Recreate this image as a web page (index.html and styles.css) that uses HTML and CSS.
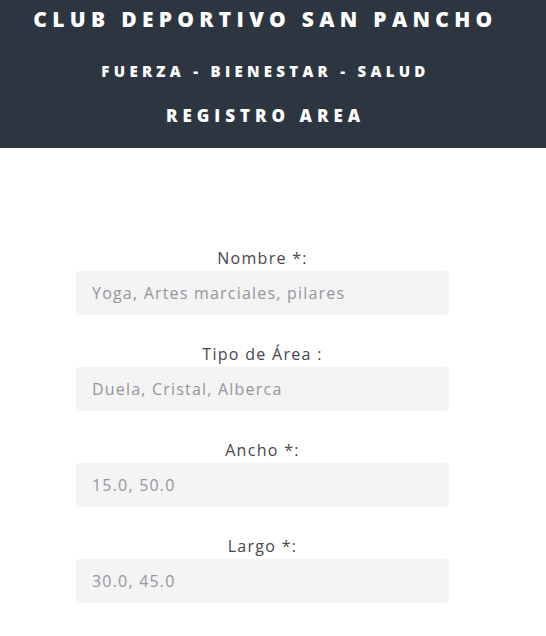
FILE: index.html
```html
<!DOCTYPE html>
<html lang="es">
<head>
<meta charset="utf-8">
<title>Registro Area</title>
<link rel="stylesheet" href="styles.css">
</head>
<body>
<header class="site-header">
  <h1 class="club-title">CLUB DEPORTIVO SAN PANCHO</h1>
  <p class="club-motto">FUERZA - BIENESTAR - SALUD</p>
  <h2 class="page-title">REGISTRO AREA</h2>
</header>
<main class="content">
  <form class="area-form">
    <div class="field">
      <label class="field-label" for="nombre">Nombre *:</label>
      <input class="field-input" id="nombre" type="text" placeholder="Yoga, Artes marciales, pilares">
    </div>
    <div class="field">
      <label class="field-label" for="tipo">Tipo de Área :</label>
      <input class="field-input" id="tipo" type="text" placeholder="Duela, Cristal, Alberca">
    </div>
    <div class="field">
      <label class="field-label" for="ancho">Ancho *:</label>
      <input class="field-input" id="ancho" type="text" placeholder="15.0, 50.0">
    </div>
    <div class="field">
      <label class="field-label" for="largo">Largo *:</label>
      <input class="field-input" id="largo" type="text" placeholder="30.0, 45.0">
    </div>
    <div class="field">
      <label class="field-label" for="capacidad">Capacidad *:</label>
      <input class="field-input" id="capacidad" type="text" placeholder="20, 30">
    </div>
  </form>
</main>
</body>
</html>
```

FILE: styles.css
```css
* { box-sizing: border-box; }
html, body { margin: 0; padding: 0; }
body {
  font-family: "Open Sans", "Liberation Sans", sans-serif;
  background: #ffffff;
  color: #46464c;
}
.site-header {
  background: #2d3640;
  color: #ffffff;
  text-align: center;
  padding: 5px 15px 20px 0;
  height: 148px;
}
.club-title {
  margin: 0;
  font-size: 21px;
  font-weight: 800;
  letter-spacing: 5.3px;
  line-height: 28px;
}
.club-motto {
  margin: 28px 0 0 0;
  font-size: 15px;
  font-weight: 800;
  letter-spacing: 4.3px;
  line-height: 20px;
}
.page-title {
  margin: 23px 0 0 0;
  font-size: 17px;
  font-weight: 800;
  letter-spacing: 5px;
  line-height: 23px;
}
.content {
  padding-top: 98px;
}
.area-form {
  width: 373px;
  margin-left: 76px;
}
.field {
  margin-bottom: 27px;
  text-align: center;
}
.field-label {
  display: block;
  font-size: 16px;
  line-height: 24px;
  letter-spacing: 1.3px;
  color: #46464c;
  margin-bottom: 1px;
}
.field-input {
  display: block;
  width: 100%;
  height: 44px;
  border: none;
  border-radius: 4px;
  background: #f4f4f5;
  padding: 0 16px;
  font-family: "Open Sans", "Liberation Sans", sans-serif;
  font-size: 16px;
  letter-spacing: 1.2px;
  color: #46464c;
  outline: none;
}
.field-input::placeholder {
  color: #95959c;
  opacity: 1;
}
```
